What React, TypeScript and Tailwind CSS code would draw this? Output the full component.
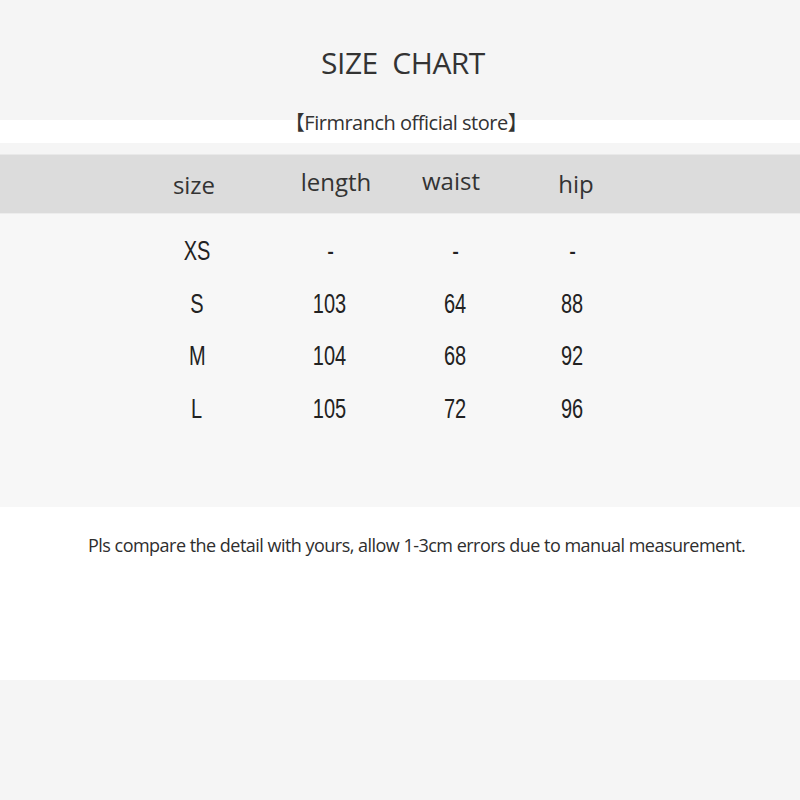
import React from 'react'

const rows = [
  ['XS', '-', '-', '-'],
  ['S', '103', '64', '88'],
  ['M', '104', '68', '92'],
  ['L', '105', '72', '96'],
]

const App = () => {
  return (
    <div className="flex flex-col w-[800px] h-[800px] bg-[#f5f5f5] font-['Open_Sans','Noto_Sans',sans-serif] text-[#333333]">
      <div className="flex justify-center h-[120px] pt-[44px] pl-[6px]">
        <h1 className="text-[30px] leading-[38px] tracking-[-0.5px] whitespace-pre">SIZE  CHART</h1>
      </div>

      <div className="flex justify-center h-[23px] pl-[12px] bg-white">
        <p className="-mt-[10px] text-[20px] leading-[26px] tracking-[-0.5px] font-['Open_Sans','Noto_Sans_CJK_SC',sans-serif]">
          【Firmranch official store】
        </p>
      </div>

      <div className="h-[12px] bg-[#f5f5f5] border-b border-[#e9e9e9]" />

      <div className="grid grid-cols-[120px_164px_66px_184px] h-[58px] pl-[134px] bg-[#dcdcdc] text-[24px] leading-[30px]">
        <span className="flex justify-center pt-[15px]">size</span>
        <span className="flex justify-center pt-[12px]">length</span>
        <span className="flex justify-center pt-[11px]">waist</span>
        <span className="flex justify-center pt-[14px]">hip</span>
      </div>

      <div className="flex flex-col h-[294px] pt-[11px] bg-[#f7f7f7] border-t border-[#ededed] font-['Liberation_Sans',sans-serif] text-[#222222]">
        {rows.map((r) => (
          <div key={r[0]} className="grid grid-cols-[120px_146px_104px_130px] h-[52.5px] pl-[137px] items-center text-[27px]">
            {r.map((c, i) => (
              <span key={i} className="flex justify-center">
                <span className="scale-x-[0.74]">{c}</span>
              </span>
            ))}
          </div>
        ))}
      </div>

      <div className="flex h-[173px] bg-white pt-[25px] pl-[88px]">
        <p className="text-[18px] leading-[26px] tracking-[-0.52px] text-[#2e2e2e] whitespace-nowrap">
          Pls compare the detail with yours, allow 1-3cm errors due to manual measurement.
        </p>
      </div>
    </div>
  )
}

export default App
